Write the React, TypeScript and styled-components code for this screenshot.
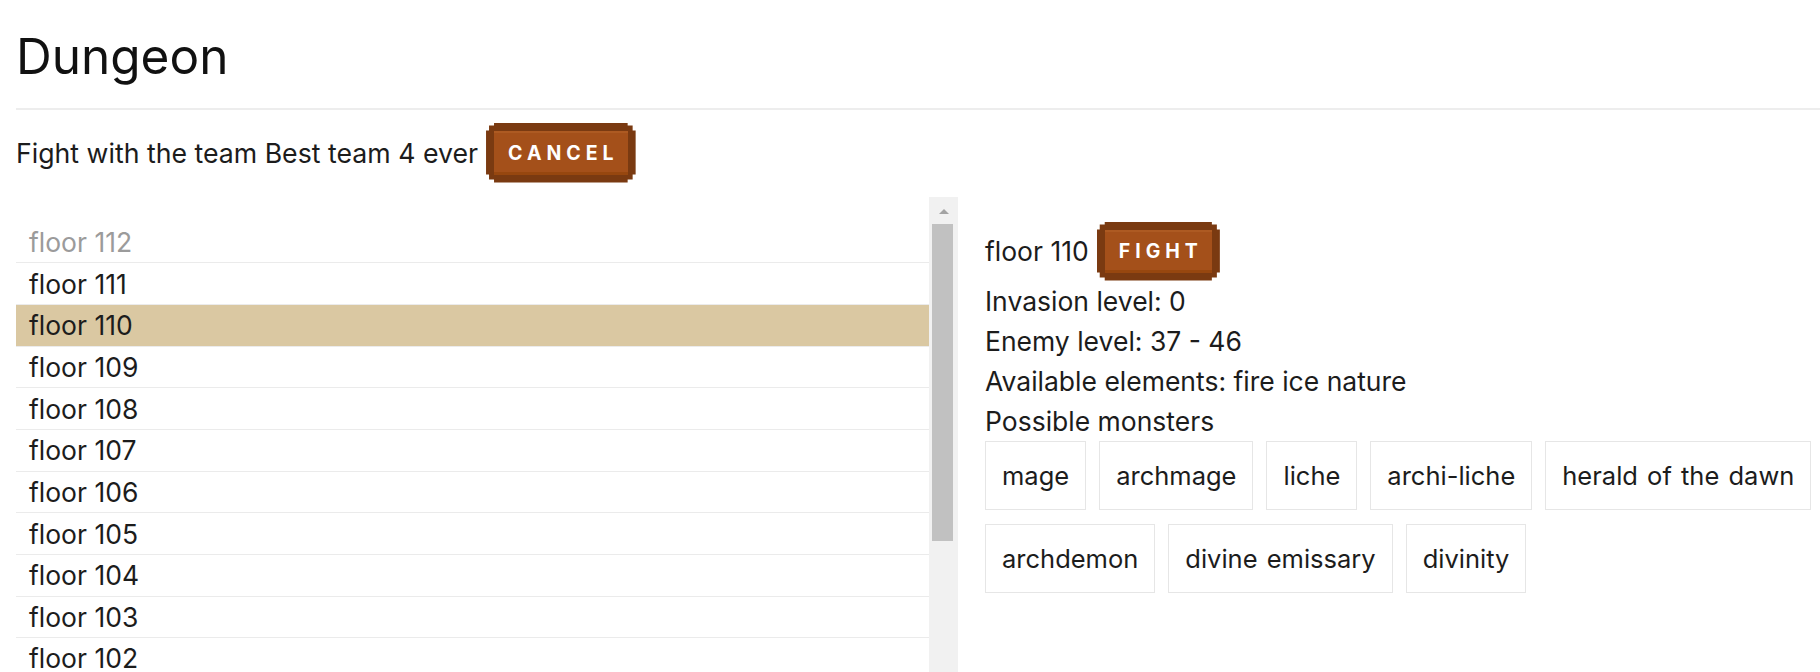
import React from "react";
import styled, { createGlobalStyle } from "styled-components";

const Global = createGlobalStyle`
  html, body { margin: 0; padding: 0; overflow: hidden; background: #fff; }
  body { font-family: Inter, "Noto Sans", sans-serif; color: #1c1c1c; }
  * { box-sizing: border-box; }
`;

const Page = styled.div`
  padding: 0 0 0 16px;
`;

const Title = styled.h1`
  margin: 28px 0 0;
  font-size: 49.5px;
  font-weight: 400;
  line-height: 57.6px;
  color: #111;
`;

const Rule = styled.hr`
  margin: 22px 0 0;
  border: none;
  height: 2px;
  background: #ededed;
`;

const TeamBar = styled.div`
  display: flex;
  align-items: center;
  gap: 8px;
  margin-top: 13px;
  font-size: 26.7px;
  height: 60px;
`;

const PixelButton = styled.button<{ $h: number }>`
  display: inline-flex;
  padding: 8px;
  height: ${(p) => p.$h}px;
  border: none;
  background: #7a3a11;
  cursor: pointer;
  clip-path: polygon(
    0 8px, 3px 8px, 3px 3px, 8px 3px, 8px 0,
    calc(100% - 8px) 0, calc(100% - 8px) 3px, calc(100% - 3px) 3px, calc(100% - 3px) 8px, 100% 8px,
    100% calc(100% - 8px), calc(100% - 3px) calc(100% - 8px), calc(100% - 3px) calc(100% - 3px), calc(100% - 8px) calc(100% - 3px), calc(100% - 8px) 100%,
    8px 100%, 8px calc(100% - 3px), 3px calc(100% - 3px), 3px calc(100% - 8px), 0 calc(100% - 8px)
  );
`;

const ButtonFace = styled.span`
  display: flex;
  align-items: center;
  height: 100%;
  padding: 0 9px 0 14px;
  background: #a4501a;
  box-shadow: inset 0 -3px 0 #97470f, inset 0 2px 0 #ad5a22;
  color: #fff;
  font-family: Inter, sans-serif;
  font-weight: 700;
  font-size: 19.5px;
  letter-spacing: 5px;
  text-transform: uppercase;
`;

const Main = styled.div`
  display: flex;
  margin-top: 14px;
  gap: 27px;
  height: 700px;
`;

const ListPane = styled.div`
  display: flex;
  width: 942px;
  flex: none;
`;

const FloorList = styled.div`
  flex: 1;
  padding-top: 25px;
`;

const FloorRow = styled.div<{ $selected?: boolean; $locked?: boolean; $last?: boolean }>`
  height: 41.67px;
  display: flex;
  align-items: center;
  padding-left: 13px;
  font-size: 26.5px;
  border-bottom: ${(p) => (p.$last ? "none" : "1px solid #ebebeb")};
  background: ${(p) => (p.$selected ? "#dac8a2" : "transparent")};
  color: ${(p) => (p.$locked ? "#9b9b9b" : "#1c1c1c")};
`;

const ScrollTrack = styled.div`
  width: 29px;
  flex: none;
  background: #f1f1f1;
  display: flex;
  flex-direction: column;
  align-items: center;
`;

const ScrollArrow = styled.div`
  margin-top: 12px;
  width: 0;
  height: 0;
  border-left: 5px solid transparent;
  border-right: 5px solid transparent;
  border-bottom: 5px solid #a3a3a3;
`;

const ScrollThumb = styled.div`
  margin-top: 10px;
  width: 21px;
  height: 317px;
  background: #c1c1c1;
  margin-left: -2px;
`;

const Detail = styled.div`
  flex: 1;
  padding-top: 25px;
  font-size: 26.5px;
`;

const DetailHead = styled.div`
  display: flex;
  align-items: center;
  gap: 8px;
  height: 59px;
`;

const InfoLine = styled.div`
  line-height: 40px;
`;

const Monsters = styled.div`
  display: flex;
  flex-wrap: wrap;
  gap: 14px 13px;
`;

const MonsterCard = styled.div`
  height: 69px;
  display: flex;
  align-items: center;
  padding: 0 16px;
  border: 1px solid #e6e6e6;
  font-size: 25.5px;
  word-spacing: 2px;
`;

const floors = Array.from({ length: 14 }, (_, i) => 112 - i);
const monsters = [
  "mage",
  "archmage",
  "liche",
  "archi-liche",
  "herald of the dawn",
  "archdemon",
  "divine emissary",
  "divinity",
];

export default function App() {
  return (
    <Page>
      <Global />
      <Title>Dungeon</Title>
      <Rule />
      <TeamBar>
        <span>Fight with the team Best team 4 ever</span>
        <PixelButton $h={60}>
          <ButtonFace>Cancel</ButtonFace>
        </PixelButton>
      </TeamBar>
      <Main>
        <ListPane>
          <FloorList>
            {floors.map((f, i) => (
              <FloorRow
                key={f}
                $locked={f === 112}
                $selected={f === 110}
                $last={i === floors.length - 1}
              >
                floor {f}
              </FloorRow>
            ))}
          </FloorList>
          <ScrollTrack>
            <ScrollArrow />
            <ScrollThumb />
          </ScrollTrack>
        </ListPane>
        <Detail>
          <DetailHead>
            <span>floor 110</span>
            <PixelButton $h={59}>
              <ButtonFace>Fight</ButtonFace>
            </PixelButton>
          </DetailHead>
          <InfoLine>Invasion level: 0</InfoLine>
          <InfoLine>Enemy level: 37 - 46</InfoLine>
          <InfoLine>Available elements: fire ice nature</InfoLine>
          <InfoLine>Possible monsters</InfoLine>
          <Monsters>
            {monsters.map((m) => (
              <MonsterCard key={m}>{m}</MonsterCard>
            ))}
          </Monsters>
        </Detail>
      </Main>
    </Page>
  );
}
